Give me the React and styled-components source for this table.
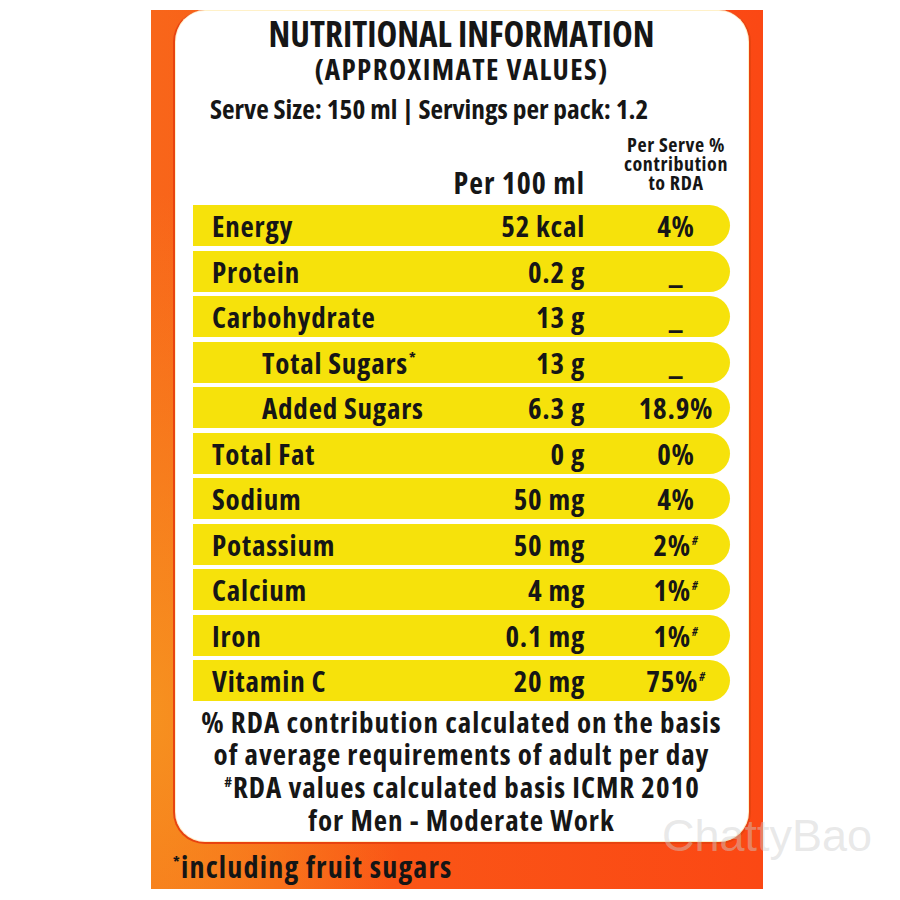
import React from 'react';
import styled, { createGlobalStyle } from 'styled-components';

const GlobalStyle = createGlobalStyle`
  html, body {
    margin: 0;
    padding: 0;
    background: #ffffff;
  }
  body {
    font-family: "Open Sans", "DejaVu Sans", sans-serif;
    font-stretch: 75%;
    font-weight: 700;
    color: #161616;
  }
`;

const Page = styled.div`
  position: relative;
  width: 900px;
  height: 900px;
  padding: 10px 0 0 151px;
  box-sizing: border-box;
`;

const Panel = styled.div`
  width: 612px;
  height: 879px;
  box-sizing: border-box;
  padding: 0 12px 0 22px;
  display: flex;
  flex-direction: column;
  background:
    radial-gradient(ellipse 260px 520px at 0% 80%, rgba(246, 150, 32, 0.9), rgba(246, 150, 32, 0) 100%),
    linear-gradient(90deg, #f8661a 0%, #fa5516 40%, #fb4814 100%);
`;

const Card = styled.div`
  background: #ffffff;
  border: 2px solid #e8430f;
  border-top-width: 0;
  border-radius: 32px;
  box-shadow: inset 0 0 0 1px #fff1c8;
  padding: 5px 19px 6px 18px;
`;

const Heading = styled.div`
  display: flex;
  justify-content: center;
  font-size: ${(p) => p.$size}px;
  letter-spacing: ${(p) => p.$ls || 0}px;
  line-height: ${(p) => p.$lh}px;
  white-space: nowrap;
`;

const ServeLine = styled.div`
  margin: 8px 0 0 17px;
  font-size: 27.4px;
  line-height: 32px;
  white-space: nowrap;
`;

const Grid = styled.div`
  display: grid;
  grid-template-columns: 1fr 150px 145px;
  align-items: center;
  padding-left: 19px;
`;

const HeaderRow = styled(Grid)`
  height: 80px;
  box-sizing: border-box;
  align-items: end;
  padding-bottom: 6px;
`;

const ColTitle = styled.div`
  grid-column: 2;
  text-align: right;
  font-size: 30px;
  letter-spacing: 1px;
  line-height: 32px;
  white-space: nowrap;
`;

const RdaTitle = styled.div`
  grid-column: 3;
  padding-left: 37px;
  margin-bottom: 7px;
  text-align: center;
  font-size: 20px;
  letter-spacing: 0.6px;
  line-height: 19px;
  white-space: nowrap;
`;

const Rows = styled.div`
  display: flex;
  flex-direction: column;
  gap: 4.5px;
`;

const Row = styled(Grid)`
  height: 41px;
  background: #f6e20b;
  border-radius: 0 21px 21px 0;
  font-size: 29px;
  letter-spacing: 0.8px;
  line-height: 41px;
  white-space: nowrap;
`;

const Label = styled.div`
  padding-left: ${(p) => (p.$indent ? 50 : 0)}px;
`;

const Value = styled.div`
  text-align: right;
`;

const Pct = styled.div`
  padding-left: 37px;
  text-align: center;
`;

const Mark = styled.sup`
  font-size: 15px;
  line-height: 0;
  vertical-align: 11px;
  margin-left: 1px;
`;

const Hash = styled.sup`
  font-size: 12px;
  line-height: 0;
  vertical-align: 11px;
  margin-left: 1px;
  font-style: italic;
`;

const Notes = styled.div`
  margin-top: 4.6px;
  text-align: center;
  font-size: 29px;
  letter-spacing: 1px;
  line-height: 32.7px;
  white-space: nowrap;
`;

const Footer = styled.div`
  margin: 7px 0 0 -1px;
  font-size: 30px;
  letter-spacing: 1.2px;
  line-height: 32px;
  white-space: nowrap;
  color: #151515;
`;

const Watermark = styled.div`
  position: absolute;
  left: 662px;
  top: 810px;
  font-family: "Liberation Sans", Arial, sans-serif;
  font-stretch: normal;
  font-size: 45px;
  font-weight: 400;
  color: rgba(205, 205, 205, 0.45);
  pointer-events: none;
`;

const nutrients = [
  { name: 'Energy', amount: '52 kcal', rda: '4%' },
  { name: 'Protein', amount: '0.2 g', rda: '_' },
  { name: 'Carbohydrate', amount: '13 g', rda: '_' },
  { name: 'Total Sugars', amount: '13 g', rda: '_', indent: true, star: true },
  { name: 'Added Sugars', amount: '6.3 g', rda: '18.9%', indent: true },
  { name: 'Total Fat', amount: '0 g', rda: '0%' },
  { name: 'Sodium', amount: '50 mg', rda: '4%' },
  { name: 'Potassium', amount: '50 mg', rda: '2%', hash: true },
  { name: 'Calcium', amount: '4 mg', rda: '1%', hash: true },
  { name: 'Iron', amount: '0.1 mg', rda: '1%', hash: true },
  { name: 'Vitamin C', amount: '20 mg', rda: '75%', hash: true },
];

export default function App() {
  return (
    <Page>
      <GlobalStyle />
      <Panel>
        <Card>
          <Heading $size={35} $lh={38}>NUTRITIONAL INFORMATION</Heading>
          <Heading $size={29} $ls={1.4} $lh={32}>(APPROXIMATE VALUES)</Heading>
          <ServeLine>Serve Size: 150 ml | Servings per pack: 1.2</ServeLine>
          <HeaderRow>
            <ColTitle>Per 100 ml</ColTitle>
            <RdaTitle>
              Per Serve %
              <br />
              contribution
              <br />
              to RDA
            </RdaTitle>
          </HeaderRow>
          <Rows>
            {nutrients.map((n) => (
              <Row key={n.name}>
                <Label $indent={n.indent}>
                  {n.name}
                  {n.star && <Mark>*</Mark>}
                </Label>
                <Value>{n.amount}</Value>
                <Pct>
                  {n.rda}
                  {n.hash && <Hash>#</Hash>}
                </Pct>
              </Row>
            ))}
          </Rows>
          <Notes>
            % RDA contribution calculated on the basis
            <br />
            of average requirements of adult per day
            <br />
            <Mark>#</Mark>
            RDA values calculated basis ICMR 2010
            <br />
            for Men - Moderate Work
          </Notes>
        </Card>
        <Footer>
          <Mark>*</Mark>
          including fruit sugars
        </Footer>
      </Panel>
      <Watermark>ChattyBao</Watermark>
    </Page>
  );
}
